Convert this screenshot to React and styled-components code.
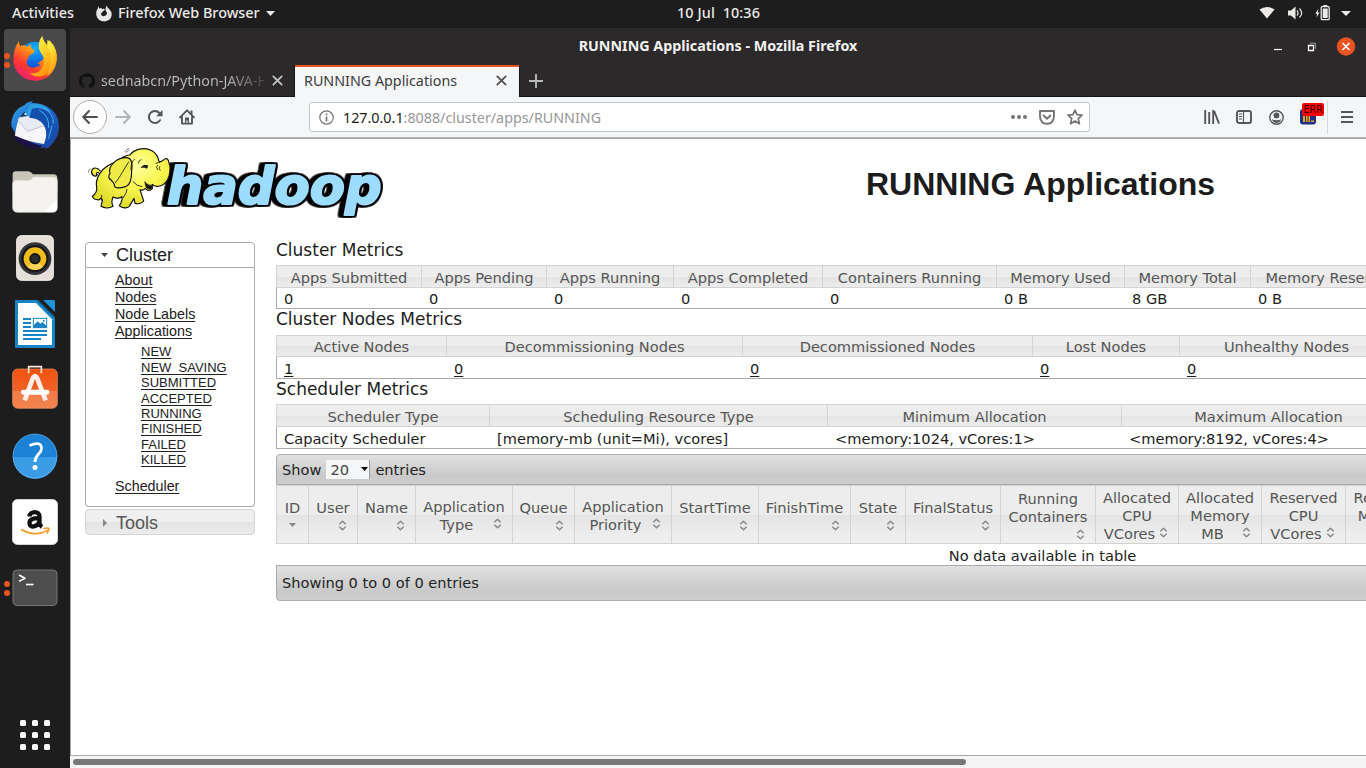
import React from 'react';
import styled, { createGlobalStyle, css } from 'styled-components';

const Global = createGlobalStyle`
  * { box-sizing: border-box; }
  html, body { margin: 0; padding: 0; overflow: hidden; background: #1d1d1d; }
`;

const ui = `'Noto Sans', 'Open Sans', sans-serif`;
const dejavu = `'DejaVu Sans', sans-serif`;
const arial = `'Liberation Sans', Arial, sans-serif`;

const Screen = styled.div`
  width: 1366px; height: 768px; overflow: hidden;
  display: flex; flex-direction: column; background: #1d1d1d;
`;

/* ---------- desktop top bar ---------- */
const TopBar = styled.header`
  height: 28px; flex: none; display: grid; grid-template-columns: 618px 201px 1fr;
  padding-bottom: 2px; align-items: center;
  color: #eceae8; font: 500 14.4px/18px ${ui};
`;
const TopLeft = styled.div`display: flex; align-items: center; padding-left: 12px; white-space: nowrap;`;
const TopLabel = styled.span`
  width: ${p => p.$w}px; margin-left: ${p => p.$ml || 0}px; padding-bottom: 1px; white-space: nowrap;
`;
const Clock = styled.div`text-align: center; white-space: pre; letter-spacing: .12px; padding-bottom: 1px;`;
const TopRight = styled.div`display: flex; justify-content: flex-end; align-items: center; padding-right: 15px;`;
const TrayIcon = styled.svg`display: block; flex: none; width: ${p => p.$w}px; height: 18px; margin-left: ${p => p.$ml || 0}px;`;

const Body = styled.div`flex: 1; display: flex; min-height: 0;`;

/* ---------- dock ---------- */
const Dock = styled.nav`
  width: 70px; flex: none; display: flex; flex-direction: column; align-items: center; gap: 4px; padding-top: 1px;
`;
const DockItem = styled.div`
  width: 62px; height: 62px; flex: none; border-radius: 4px; position: relative;
  display: flex; align-items: center; justify-content: center;
  padding-bottom: ${p => p.$lift || 0}px;
  background: ${p => (p.$active ? '#494949' : 'transparent')};
  margin-top: ${p => (p.$last ? 'auto' : 0)}; margin-bottom: ${p => (p.$last ? '2px' : 0)};
`;
const Pips = styled.div`
  position: absolute; left: 0; top: 24px; display: flex; flex-direction: column; gap: 2.5px;
  &::before, &::after { content: ''; width: 6px; height: 6px; border-radius: 50%; background: #e95420; }
`;
const Icon = styled.svg`display: block; flex: none; overflow: visible;`;

/* ---------- browser window ---------- */
const Window = styled.main`flex: 1; min-width: 0; display: flex; flex-direction: column; background: #f5f6f8;`;
const TitleBar = styled.div`
  height: 37px; flex: none; background: #2c292a; display: grid; grid-template-columns: 1fr auto 1fr; align-items: center;
  color: #f4f3f2; font: 700 14.3px ${ui};
`;
const TitleText = styled.span`padding-bottom: 2px;`;
const WindowButtons = styled.div`display: flex; justify-content: flex-end; padding-right: 10px;`;
const TabStrip = styled.div`
  height: 32px; flex: none; display: flex; background: #2c292a; border-bottom: 1px solid #151415;
`;
const Tab = styled.div`
  width: ${p => (p.$on ? 224 : 225)}px; height: 32px; flex: none; display: flex; align-items: center;
  padding: 0 12px 1px 9px;
  font: 14.3px ${ui}; color: ${p => (p.$on ? '#3c3c3c' : '#bdbcbc')};
  ${p => p.$on && css`
    background: #f5f6f8; border-top: 2px solid #e95420; padding-bottom: 3px;
    box-shadow: -1px 0 #151415, 1px 0 #151415;
  `}
`;
const TabTitle = styled.span`
  flex: 1; overflow: hidden; white-space: nowrap;
  ${p => p.$fade && css`
    margin: 0 8px 0 6px; background: linear-gradient(90deg, #bdbcbc 125px, #2c292a 170px);
    -webkit-background-clip: text; background-clip: text; color: transparent;
  `}
`;
const NewTab = styled.div`width: 34px; display: flex; align-items: center; justify-content: center;`;
const NavBar = styled.div`
  height: 41px; flex: none; background: #f5f6f8; border-bottom: 1px solid #b4b6b8;
  display: flex; align-items: center; padding-left: 3px;
`;
const BackButton = styled.div`
  width: 34px; height: 34px; border-radius: 50%; background: #fdfdfd; border: 1px solid #adadad;
  display: flex; align-items: center; justify-content: center;
`;
const NavButton = styled.div`width: ${p => p.$w || 32}px; display: flex; justify-content: center; position: relative;`;
const UrlBar = styled.div`
  width: 781px; height: 30px; margin: 0 106px; background: #fff; border: 1px solid #c3c8cc; border-radius: 3px;
  display: flex; align-items: center; padding: 0 0 0 9px;
`;
const Url = styled.span`
  flex: 1; margin-left: 9px; font: 14.3px ${ui}; color: #97979a; white-space: nowrap;
  & > b { font-weight: 400; color: #1c1c1c; }
`;
const UrlAction = styled.div`width: 28px; display: flex; justify-content: center;`;
const ErrBadge = styled.span`
  position: absolute; left: 10px; top: -6px; width: 22px; height: 13px; background: #fc0000; border-radius: 2px;
  color: #3a0000; font: 10px/14px ${dejavu}; text-align: center; letter-spacing: -.2px;
`;
const Divider = styled.div`width: 1px; height: 34px; background: #d6d8da; margin-left: 3px;`;

/* ---------- page ---------- */
const Viewport = styled.div`
  flex: 1; min-height: 0; background: #fff; border: 1px solid #a7a8a9; border-width: 1px 0 1px 1px; overflow: hidden;
  color: #1c1c1c; font: 14.6px ${dejavu};
`;
const PageHead = styled.div`height: 99px; display: flex; padding: 7px 0 0 16px;`;
const PageTitle = styled.h1`
  margin: 0 0 0 479px; padding-top: 20px; font: 700 32px/37px ${arial}; color: #1c1c1c; white-space: nowrap;
`;
const Columns = styled.div`display: flex; padding-left: 14px;`;
const Side = styled.aside`width: 170px; flex: none; margin: 4px 21px 0 0; font-family: ${arial};`;
const SideHead = styled.div`
  height: 26px; display: flex; align-items: center; font-size: 18px; padding-left: 14px;
  padding-top: ${p => (p.$open ? 0 : 2)}px;
  color: ${p => (p.$open ? '#212121' : '#555')};
  border: 1px solid ${p => (p.$open ? '#aaa' : '#d3d3d3')};
  border-radius: ${p => (p.$open ? '4px 4px 0 0' : '4px')};
  background: ${p => (p.$open ? '#fff' : 'linear-gradient(#efefef 0 50%, #e3e3e3 51%, #ececec)')};
  margin-top: ${p => (p.$open ? 0 : 2)}px;
  & > svg { margin-right: 7px; }
`;
const SideBody = styled.div`
  height: 239px; border: 1px solid #aaa; border-top: 0; border-radius: 0 0 4px 4px; padding: 4px 0 0 29px;
`;
const SideLink = styled.a`
  display: block; width: max-content; font-size: 14.3px; line-height: 17px; height: 17px; color: #212121;
  text-decoration: underline; text-underline-offset: 2px; text-decoration-skip-ink: none;
`;
const SubList = styled.div`padding: 4.4px 0 0 26px; height: 138px;`;
const SubLink = styled.a`
  display: block; width: max-content; font-size: 13px; line-height: 15.4px; color: #212121;
  text-decoration: underline; text-underline-offset: 2px; text-decoration-skip-ink: none;
`;
const Content = styled.section`width: 1533px; flex: none;`;
const Heading = styled.div`
  font-size: 17px; line-height: 20px; height: ${p => p.$h}px; padding-top: ${p => p.$pt}px; color: #1c1c1c;
`;
const Grid = styled.div`
  display: grid; grid-template-columns: ${p => p.$cols.map(c => c + 'px').join(' ')} 1fr;
  grid-template-rows: ${p => p.$head}px ${p => p.$row}px;
  border-bottom: 1px solid #aaa;
`;
const Th = styled.div`
  border: 1px solid #d3d3d3; border-right: 0; text-align: center; color: #555; white-space: nowrap;
  line-height: ${p => p.$lh}px; overflow: hidden;
  background: linear-gradient(#ededed 0 50%, #e4e4e4 51%, #ececec);
`;
const Td = styled.div`
  padding-left: ${p => (p.$first ? 7 : 8)}px; line-height: ${p => p.$lh}px; white-space: nowrap;
  border-left: ${p => (p.$first ? '1px solid #aaa' : 0)};
`;
const NodeLink = styled.a`text-decoration: underline; text-underline-offset: 2px;`;
const Bar = styled.div`
  height: ${p => p.$h}px; border: 1px solid #aaa; display: flex; align-items: center;
  padding: 0 0 ${p => (p.$top ? 0 : 2)}px 5px;
  border-radius: ${p => (p.$top ? '4px 0 0 0' : '0 0 0 4px')};
  background: linear-gradient(#e1e1e1, #cacaca 70%, #cdcdcd); color: #222;
  margin-top: ${p => (p.$top ? 5 : 0)}px;
`;
const Select = styled.div`
  width: 44px; height: 19px; margin: 0 5px; background: #f5f6f8; border-right: 1px solid #999;
  display: flex; align-items: center; justify-content: space-between; padding-left: 4px; color: #444;
`;
const SortGrid = styled.div`
  display: grid; height: 59px;
  grid-template-columns: 32px 49px 58px 97px 62px 97px 87px 92px 55px 95px 95px 83px 83px 84px 84px 1fr;
`;
const SortHead = styled.div`
  border: 1px solid #d3d3d3; border-right: 0; color: #555; overflow: hidden; padding-top: 2px;
  display: flex; flex-direction: column; justify-content: center; align-items: stretch; text-align: center;
  background: linear-gradient(#ededed 0 50%, #e4e4e4 51%, #f1f1f1);
`;
const Line = styled.div`line-height: 18px; height: 18px; white-space: nowrap;`;
const LastLine = styled(Line)`
  display: flex; align-items: center; justify-content: center; padding: 0 ${p => (p.$center ? 0 : 10)}px 0 ${p => (p.$center ? 0 : 4)}px;
  height: ${p => (p.$bare ? 16 : 18)}px;
  & > span { flex: 1; }
  & > svg { margin-top: ${p => (p.$bare ? 1 : 0)}px; margin-bottom: ${p => (p.$bare ? 0 : 2)}px; }
`;
const Empty = styled.div`height: 21px; line-height: 24px; text-align: center;`;
const ScrollTrack = styled.div`height: 12px; flex: none; background: #f5f5f5; padding: 3px 0 0 3px;`;
const ScrollThumb = styled.div`width: 893px; height: 6px; border-radius: 3px; background: #777;`;

/* ---------- icons ---------- */
const stroke = { fill: 'none', strokeLinecap: 'round', strokeLinejoin: 'round' };

const FirefoxIcon = () => (
  <Icon width="46" height="48" viewBox="0 0 138 144">
    <defs>
      <linearGradient id="ffr" x1=".8" y1="0" x2=".1" y2="1">
        <stop offset="0" stopColor="#ffcf2e" /><stop offset=".35" stopColor="#ff9a16" /><stop offset=".65" stopColor="#ff3b2f" /><stop offset="1" stopColor="#e31587" />
      </linearGradient>
      <radialGradient id="ffb" cx=".5" cy=".2" r=".8"><stop offset="0" stopColor="#12b4ff" /><stop offset=".6" stopColor="#0a63e0" /><stop offset="1" stopColor="#3a2e96" /></radialGradient>
      <linearGradient id="ffy" x1="0" y1="0" x2=".5" y2="1"><stop offset="0" stopColor="#fff44f" /><stop offset=".5" stopColor="#ffd82e" /><stop offset="1" stopColor="#ff980e" /></linearGradient>
    </defs>
    <circle cx="68" cy="66" r="49" fill="url(#ffb)" />
    <path fill="url(#ffr)" d="M21 14 C20 21 22 26 25 30 C32 27 39 27 46 32 L57 23 C55 33 60 40 68 42 L65 51 L54 57 L48 68 C40 75 44 90 56 94 C66 98 77 90 83 89 C84 84 79 82 74 82 C91 76 98 66 98 54 L105 30 L111 12 C127 26 134 44 134 68 C133 106 106 134 69 134 C32 134 4 106 4 72 C4 50 9 31 21 14Z" />
    <path fill="url(#ffy)" d="M91 0 C79 14 76 36 87 51 C99 67 99 83 90 97 C82 110 67 115 53 110 C69 128 101 125 114 101 C125 80 126 52 108 30 C99 20 93 12 91 0Z" />
    <path fill="url(#ffy)" d="M106 12 C130 28 136 48 134 70 C132 88 122 109 105 119 C119 92 122 53 106 34Z" />
  </Icon>
);

const ThunderbirdIcon = () => (
  <Icon width="50" height="50" viewBox="0 0 150 150">
    <defs><linearGradient id="tb" x1="0" y1="0" x2="1" y2="1"><stop offset="0" stopColor="#32a5e8" /><stop offset=".5" stopColor="#1d62c8" /><stop offset="1" stopColor="#1c3f9b" /></linearGradient></defs>
    <path fill="url(#tb)" d="M4 76 C2 45 20 20 43 13 C50 4 59 1 69 1 L62 8 C92 3 121 17 136 38 C151 61 150 94 137 113 C126 132 117 141 103 145 L109 137 L94 141 L18 100 Z" />
    <path fill="#f6f6fa" d="M14 107 C18 85 21 64 29 49 C54 40 89 39 105 63 C111 81 112 103 102 129 C73 124 43 116 14 107Z" />
    <path fill="#e9ebf3" stroke="#a5a9b8" strokeWidth="2" d="M23 57 L52 91 L106 73 C98 49 71 39 29 49Z" />
    <path fill="#1c1246" d="M9 101 L73 128 L98 135 L82 143 C54 142 27 132 9 101Z" />
    <path fill="#2e9ce0" d="M43 49 L60 8 C91 4 115 17 124 36 C105 24 75 20 61 49 C52 41 47 43 43 49Z" />
    <path fill="#154fae" d="M58 50 L66 23 C93 15 118 30 128 53 L124 67 L134 61 L132 83 L141 76 L130 105 L136 106 L108 137 C114 96 111 54 58 50Z" />
    <path {...stroke} stroke="#43aff0" strokeWidth="3" d="M89 28 Q119 45 116 80M102 20 Q134 42 130 68M126 74 L116 112" />
    <path fill="#18345f" d="M30 48 L43 32 Q48 36 49 45Z" /><circle cx="46" cy="39" r="3" fill="#fff" />
  </Icon>
);

const FilesIcon = () => (
  <Icon width="46" height="42" viewBox="0 0 138 126">
    <path fill="#c9c5b9" d="M2 10 Q2 1 12 1 H50 Q57 2 63 10 H124 Q136 10 136 22 V60 H2Z" />
    <path fill="#f4f3f0" stroke="#d7d3ca" strokeWidth="2" d="M2 38 Q2 28 13 28 H51 Q58 28 63 18 H124 Q136 18 136 30 V109 Q136 124 122 124 H17 Q2 124 2 109Z" />
    <path fill="#fff" d="M134 86 V109 Q134 122 121 122 H98Z" />
  </Icon>
);

const MusicIcon = () => (
  <Icon width="38" height="46" viewBox="0 0 114 138">
    <rect x="2" y="2" width="110" height="134" rx="14" fill="#e5e0d7" stroke="#f4f2ee" strokeWidth="3" />
    <circle cx="57" cy="71" r="49" fill="#34343b" /><circle cx="57" cy="71" r="41" fill="#17171d" />
    <circle cx="57" cy="71" r="34" fill="#f1bc17" /><path d="M57 71 L35 97 A34 34 0 0 0 81 95Z" fill="#f9d558" />
    <circle cx="57" cy="71" r="17" fill="#111" /><circle cx="57" cy="71" r="12" fill="#2c2c2c" />
  </Icon>
);

const WriterIcon = () => (
  <Icon width="40" height="48" viewBox="0 0 120 144">
    <path fill="#1484c6" d="M4 0 H66 L120 54 V140 Q120 144 116 144 H4 Q0 144 0 140 V4 Q0 0 4 0Z" />
    <path fill="#fff" d="M9 9 H63 L111 58 V135 H9Z" />
    <path fill="#1d1d1d" d="M66 0 H84 L120 36 V54Z" /><path fill="#0d6ca9" d="M66 0 H70 L120 50 V55Z" /><path fill="#1d93d8" d="M84 0 H116 Q120 0 120 4 V36Z" />
    <path fill="#1484c6" d="M24 54 h24v6h-24z M24 66 h24v6h-24z M24 78 h24v6h-24z M24 90 h72v6h-72z M24 102 h72v6h-72z M24 114 h54v6h-54z" />
    <rect x="55" y="55" width="40" height="28" fill="none" stroke="#1484c6" strokeWidth="3" />
    <path fill="#1484c6" d="M56 83 V76 L68 64 L76 71 L82 66 L95 77 V83Z" /><rect x="84" y="60" width="5" height="5" fill="#1484c6" />
  </Icon>
);

const SoftwareIcon = () => (
  <Icon width="46" height="44" viewBox="0 0 138 132">
    <defs><linearGradient id="sw" x1="0" y1="0" x2="0" y2="1"><stop offset="0" stopColor="#f0520f" /><stop offset=".55" stopColor="#ee6128" /><stop offset=".56" stopColor="#f27a45" /><stop offset="1" stopColor="#f28450" /></linearGradient></defs>
    <rect x="2" y="12" width="134" height="118" rx="15" fill="url(#sw)" stroke="#f3956b" strokeWidth="2" />
    <path d="M50 25 V5 H88 V25" fill="none" stroke="#fbe4d9" strokeWidth="5" />
    <path d="M38 106 L63 38 Q69 28 75 38 L101 106" fill="none" stroke="#fdf0e9" strokeWidth="14" />
    <rect x="27" y="74" width="85" height="15" rx="7" fill="#fff" />
  </Icon>
);

const HelpIcon = () => (
  <Icon width="46" height="46" viewBox="0 0 46 46">
    <circle cx="23" cy="23" r="22" fill="#1c82d6" /><path fill="#3a9ce5" d="M1 24 H45 A22 22 0 0 1 1 24Z" />
    <circle cx="23" cy="23" r="22" fill="none" stroke="#6bb8f0" strokeWidth=".7" />
    <path {...stroke} strokeLinecap="butt" stroke="#fff" strokeWidth="2.8" d="M17.5 12.5 Q29.5 7.5 29.5 15.5 C29.5 21 22.8 21.5 23 29" />
    <circle cx="23" cy="34.5" r="2.5" fill="#fff" />
  </Icon>
);

const AmazonIcon = () => (
  <Icon width="46" height="46" viewBox="0 0 46 46">
    <rect x=".5" y=".5" width="45" height="45" rx="5" fill="#fff" stroke="#d2d2d2" />
    <path fill="none" stroke="#111" strokeWidth="4.3" d="M17.3 17.6 C18 11.8 27.5 11.4 27.5 17.7 V24 Q27.7 26.5 30 28 M27.3 19.2 C20 19 17.5 21 17.5 24 C17.5 29.5 25.8 28.2 27.3 22.5" />
    <path {...stroke} stroke="#f7981d" strokeWidth="1.5" d="M9.5 30.5 Q22.5 38.5 35.5 31.3 M32 29.5 Q36.5 28.6 37 29.4 Q37.3 30.7 35.3 34" />
  </Icon>
);

const TerminalIcon = () => (
  <Icon width="46" height="38" viewBox="0 0 46 38">
    <rect x="1" y="1" width="44" height="35.5" rx="4" fill="#4d4d4d" stroke="#777" />
    <path {...stroke} strokeLinecap="butt" stroke="#fff" strokeWidth="1.6" d="M7 6 L13 9.2 L7 12.4" /><path d="M14 15.5 h7.5" stroke="#fff" strokeWidth="1.6" />
  </Icon>
);

const GridIcon = () => (
  <Icon width="30" height="30" viewBox="0 0 30 30">
    {[0, 12, 24].map(y => [0, 12, 24].map(x => <rect key={x + '-' + y} x={x} y={y} width="6" height="6" rx="1.5" fill="#fafafa" />))}
  </Icon>
);

const Cross = ({ color }) => (
  <Icon width="11" height="11" viewBox="0 0 11 11"><path {...stroke} stroke={color} strokeWidth="1.7" d="M1.3 1.3 L9.7 9.7 M9.7 1.3 L1.3 9.7" /></Icon>
);

const SortIcon = () => (
  <Icon width="9" height="11" viewBox="0 0 9 11"><path {...stroke} strokeLinecap="butt" stroke="#888" strokeWidth="1.5" d="M1.3 4.2 L4.5 1.2 L7.7 4.2 M1.3 6.8 L4.5 9.8 L7.7 6.8" /></Icon>
);

const Wordmark = styled.text`
  font: italic 700 157px ${dejavu};
  fill: #9cdcff; stroke: #9cdcff; stroke-width: 6px; stroke-linejoin: round;
  filter: drop-shadow(5px 0 0 #000) drop-shadow(-5px 0 0 #000) drop-shadow(0 5px 0 #000) drop-shadow(0 -5px 0 #000) drop-shadow(-11px 0 0 #000);
`;

const HadoopLogo = () => (
  <Icon width="300" height="74" viewBox="51 30 900 222">
    <defs>
      <radialGradient id="el" cx=".55" cy=".3" r=".7"><stop offset="0" stopColor="#ffffa6" /><stop offset=".5" stopColor="#f9f650" /><stop offset="1" stopColor="#dedb2c" /></radialGradient>
    </defs>
    <Wordmark x="290" y="203" textLength="645" lengthAdjust="spacingAndGlyphs">hadoop</Wordmark>
    <g stroke="#111" strokeWidth="3.5" strokeLinejoin="round" strokeLinecap="round">
      <path fill="#f1ed45" d="M88 112 C80 104 76 118 82 116 C76 126 63 117 65 105 C67 94 81 92 91 105" />
      <path fill="url(#el)" d="M88 115 C100 94 117 82 147 77 C151 66 170 56 180 57 C191 40 222 31 246 44 C258 51 264 61 267 76 C277 82 281 66 289 68 C298 69 295 79 300 90 C301 116 296 142 270 150 C260 153 252 150 247 145 L247 158 C239 166 231 164 226 157 C221 162 216 164 210 161 L221 195 C215 203 203 205 195 202 L192 187 L178 211 C170 219 157 216 148 209 C154 201 158 194 156 182 C146 189 137 187 129 183 C124 195 125 203 129 211 C118 218 102 217 93 211 L97 194 L92 187 L86 192 C76 191 69 188 67 181 C76 174 82 166 80 155 C77 139 81 126 88 115Z" />
      <path fill="#efec48" d="M120 113 C113 91 138 64 171 65 C187 67 188 89 185 104 C185 124 182 145 169 151 C156 156 138 158 134 152 C135 143 129 139 124 133 C116 127 113 121 120 113Z" />
      <path fill="none" strokeWidth="2.5" d="M136 140 C149 126 164 95 176 78 M183 101 Q182 78 193 70 M189 137 Q200 151 216 152 M97 194 Q93 184 95 178 M160 185 Q171 170 171 160" />
      <path fill="none" strokeWidth="2.5" d="M205 81 Q206 73 213 71 M262 88 Q256 95 263 101 M269 92 Q266 98 270 103 M258 82 L270 79" />
      <path fill="#111" strokeWidth="2" d="M214 94 Q223 84 233 89 L231 97 Q224 92 214 94Z M225 138 Q234 150 247 148 L244 158 Q233 162 228 153Z" />
      <path fill="none" strokeWidth="1.5" d="M164 47 Q168 39 178 38 M168 50 L176 44 M55 109 Q56 99 61 97" />
    </g>
  </Icon>
);

/* ---------- data ---------- */
const clusterMetrics = [['Apps Submitted', '0'], ['Apps Pending', '0'], ['Apps Running', '0'], ['Apps Completed', '0'], ['Containers Running', '0'], ['Memory Used', '0 B'], ['Memory Total', '8 GB'], ['Memory Reserved', '0 B']];
const nodeMetrics = [['Active Nodes', '1'], ['Decommissioning Nodes', '0'], ['Decommissioned Nodes', '0'], ['Lost Nodes', '0'], ['Unhealthy Nodes', '0']];
const schedulerMetrics = [['Scheduler Type', 'Capacity Scheduler'], ['Scheduling Resource Type', '[memory-mb (unit=Mi), vcores]'], ['Minimum Allocation', '<memory:1024, vCores:1>'], ['Maximum Allocation', '<memory:8192, vCores:4>']];
const sortColumns = [['User', ''], ['Name', ''], ['Application', 'Type'], ['Queue', ''], ['Application', 'Priority'], ['StartTime', ''], ['FinishTime', ''], ['State', ''], ['FinalStatus', ''], ['Running', 'Containers', ''], ['Allocated', 'CPU', 'VCores'], ['Allocated', 'Memory', 'MB'], ['Reserved', 'CPU', 'VCores'], ['Reserved', 'Memory', 'MB']];
const states = ['NEW', 'NEW_SAVING', 'SUBMITTED', 'ACCEPTED', 'RUNNING', 'FINISHED', 'FAILED', 'KILLED'];

const Metrics = ({ data, cols, head, row, lh, link }) => (
  <Grid $cols={cols} $head={head} $row={row}>
    {data.map(([h]) => <Th key={h} $lh={link ? 21 : 23}>{h}</Th>)}<Th />
    {data.map(([h, v], i) => <Td key={h} $first={i === 0} $lh={lh}>{link ? <NodeLink>{v}</NodeLink> : v}</Td>)}<Td />
  </Grid>
);

const DesktopBar = () => (
  <TopBar>
    <TopLeft>
      <TopLabel $w={84}>Activities</TopLabel>
      <Icon width="16" height="17" viewBox="0 0 16 17">
        <path fill="#e8e6e4" d="M2.3 1 L3.2 3.4 Q5 2.6 6.2 4 Q8 3.3 9 4 Q8.2 6 6.8 6.4 Q6 8 4.9 8.5 Q5 11 7.5 11.3 Q10.2 11 11 8.7 Q11 6.8 9.6 6 Q9 3 10.8 .5 Q11 2.5 13.2 4 Q16 6.5 15.7 10 Q15 16 8.3 16.4 Q1.7 16 .4 10.5 Q-.2 5.8 1.5 4.3Z" />
        <path stroke="#1d1d1d" strokeWidth="1" fill="none" d="M6 8.6 Q8 7.6 9.8 9" />
      </Icon>
      <TopLabel $w={148} $ml={6}>Firefox Web Browser</TopLabel>
      <Icon width="9" height="5" viewBox="0 0 9 5"><path fill="#e8e6e4" d="M0 0 H9 L4.5 5Z" /></Icon>
    </TopLeft>
    <Clock>10 Jul  10:36</Clock>
    <TopRight>
      <TrayIcon $w={16} viewBox="0 0 16 18"><path fill="#eceae8" d="M.5 5.5 Q8 .5 15.5 5.5 L8 14.5Z" /></TrayIcon>
      <TrayIcon $w={16} $ml={13} viewBox="0 0 16 18"><path fill="#eceae8" d="M0 6.5 H3 L7.5 2.5 V15.5 L3 11.5 H0Z" /><path {...stroke} stroke="#eceae8" strokeWidth="1.2" d="M9.3 6.8 Q10.8 9 9.3 11.2 M11.8 4.8 Q15.5 9 11.8 13.2" /></TrayIcon>
      <TrayIcon $w={16} $ml={11} viewBox="0 0 16 18"><path fill="#eceae8" d="M3.3 5 L.3 9.7 H2.1 L1.4 13.5 L4.6 8.5 H2.8Z M8.3 1 H12.3 V3 H8.3Z" /><rect x="6.2" y="2.7" width="8" height="13" rx="1" fill="none" stroke="#eceae8" strokeWidth="1.3" /><path fill="#eceae8" d="M7.7 4.5 h5 v9.5 h-5z" /></TrayIcon>
      <TrayIcon $w={10} $ml={10} viewBox="0 0 10 18"><path fill="#eceae8" d="M0 7 H10 L5 12Z" /></TrayIcon>
    </TopRight>
  </TopBar>
);

const Navigation = () => (
  <NavBar>
    <BackButton><Icon width="16" height="14" viewBox="0 0 16 14"><path {...stroke} stroke="#4e4f51" strokeWidth="2" d="M7 1 L1.2 7 L7 13 M1.5 7 H15" /></Icon></BackButton>
    <NavButton><Icon width="16" height="14" viewBox="0 0 16 14"><path {...stroke} stroke="#b3b4b6" strokeWidth="2" d="M9 1 L14.8 7 L9 13 M14.5 7 H1" /></Icon></NavButton>
    <NavButton><Icon width="16" height="16" viewBox="0 0 16 16"><path {...stroke} stroke="#555658" strokeWidth="2" d="M13 11.2 A6 6 0 1 1 12.4 4" /><path fill="#555658" d="M15.5 1 V7.3 H9.2Z" /></Icon></NavButton>
    <NavButton><Icon width="16" height="16" viewBox="0 0 16 16"><path {...stroke} stroke="#555658" strokeWidth="1.9" d="M1 8.3 L8 1.3 L15 8.3 M3 8 V14.6 H13 V8" /><path fill="#555658" d="M6 8.5 h4 v6 h-1.3 v-3 h-1.4 v3 h-1.3z M11.5 1.5 h2 v4 h-2z" /></Icon></NavButton>
    <UrlBar>
      <Icon width="15" height="15" viewBox="0 0 15 15"><circle cx="7.5" cy="7.5" r="6.7" fill="none" stroke="#737476" strokeWidth="1.2" /><path d="M7.5 6.5 v5 M7.5 3.5 v1.7" stroke="#737476" strokeWidth="1.7" /></Icon>
      <Url><b>127.0.0.1</b>:8088/cluster/apps/RUNNING</Url>
      <UrlAction><Icon width="16" height="4" viewBox="0 0 16 4"><g fill="#737476"><circle cx="2" cy="2" r="2" /><circle cx="8" cy="2" r="2" /><circle cx="14" cy="2" r="2" /></g></Icon></UrlAction>
      <UrlAction><Icon width="16" height="15" viewBox="0 0 16 15"><path {...stroke} stroke="#737476" strokeWidth="1.9" d="M1 1 H15 V6.5 Q14.5 13.7 8 13.8 Q1.5 13.7 1 6.5Z M4.6 5.5 L8 8.7 L11.4 5.5" /></Icon></UrlAction>
      <UrlAction><Icon width="16" height="16" viewBox="0 0 16 16"><path {...stroke} stroke="#737476" strokeWidth="1.7" d="M8 1.2 L10 5.7 L15 6.2 L11.3 9.6 L12.4 14.7 L8 12 L3.6 14.7 L4.7 9.6 L1 6.2 L6 5.7Z" /></Icon></UrlAction>
    </UrlBar>
    <NavButton><Icon width="16" height="14" viewBox="0 0 16 14"><path d="M1.2 0 V14 M5.2 2 V14 M9.2 0 V14 M10.2 1 L15 13.7" stroke="#555658" strokeWidth="1.9" /></Icon></NavButton>
    <NavButton><Icon width="16" height="14" viewBox="0 0 16 14"><rect x="1" y="1" width="14" height="12" rx="2" fill="none" stroke="#555658" strokeWidth="1.9" /><path d="M7.5 1 V13 M3 4 h3 M3 6.5 h3 M3 9 h3" stroke="#555658" strokeWidth="1.2" /></Icon></NavButton>
    <NavButton><Icon width="15" height="15" viewBox="0 0 15 15"><circle cx="7.5" cy="7.5" r="6.7" fill="none" stroke="#555658" strokeWidth="1.4" /><circle cx="7.5" cy="5.5" r="2.9" fill="#555658" /><path fill="#555658" d="M2.8 9.2 Q7.5 11.3 12.2 9.2 Q10.8 13 7.5 13 Q4.2 13 2.8 9.2Z" /></Icon></NavButton>
    <NavButton>
      <Icon width="16" height="16" viewBox="0 0 16 16"><rect y="0" width="16" height="15.5" rx="3" fill="#1d3282" /><path fill="#f9a51b" d="M3 7 h2 v6 h-2z M6 7 h1.5 v6 h-1.5z M8.5 7 h1.5 v6 h-1.5z M11 11.5 h3 v1.5 h-3z" /></Icon>
      <ErrBadge>ERR</ErrBadge>
    </NavButton>
    <Divider />
    <NavButton $w={38}><Icon width="12" height="12" viewBox="0 0 12 12"><path d="M0 1 H12 M0 6 H12 M0 11 H12" stroke="#555658" strokeWidth="2" /></Icon></NavButton>
  </NavBar>
);

export default function App() {
  return (
    <Screen>
      <Global />
      <DesktopBar />
      <Body>
        <Dock>
          <DockItem $active><Pips /><FirefoxIcon /></DockItem>
          <DockItem><ThunderbirdIcon /></DockItem>
          <DockItem><FilesIcon /></DockItem>
          <DockItem><MusicIcon /></DockItem>
          <DockItem><WriterIcon /></DockItem>
          <DockItem $lift={7}><SoftwareIcon /></DockItem>
          <DockItem><HelpIcon /></DockItem>
          <DockItem><AmazonIcon /></DockItem>
          <DockItem><Pips /><TerminalIcon /></DockItem>
          <DockItem $last><GridIcon /></DockItem>
        </Dock>
        <Window>
          <TitleBar>
            <span />
            <TitleText>RUNNING Applications - Mozilla Firefox</TitleText>
            <WindowButtons>
              <Icon width="88" height="20" viewBox="0 0 88 20">
                <path d="M6 12.5 h8" stroke="#fff" strokeWidth="1.2" />
                <path d="M40.5 8.5 h5 v5 h-5z" fill="none" stroke="#fff" strokeWidth="1.3" /><path d="M42 6.2 h5.5 v5.5" fill="none" stroke="#999" />
                <circle cx="78" cy="9.5" r="9.2" fill="#e95420" /><path d="M74.5 6 L81.5 13 M81.5 6 L74.5 13" stroke="#fff" strokeWidth="1.6" />
              </Icon>
            </WindowButtons>
          </TitleBar>
          <TabStrip>
            <Tab>
              <Icon width="16" height="16" viewBox="0 0 16 16"><path fill="#111" d="M8 .2 A8 8 0 0 0 5.5 15.8 V13.5 Q3.3 13.8 2.8 12.2 L1.8 11.2 Q3.3 11 4 12.3 Q4.7 12.9 5.6 12.5 L6 11.6 Q3 11 2.9 7.9 L3.8 5.6 L3.8 3.5 L6 4.3 Q8 3.9 10 4.3 L12.2 3.5 V5.6 Q14 9.8 10 11.6 L10.5 13 V15.8 A8 8 0 0 0 8 .2Z" /></Icon>
              <TabTitle $fade>sednabcn/Python-JAVA-H</TabTitle>
              <Cross color="#c8c8c8" />
            </Tab>
            <Tab $on>
              <TabTitle>RUNNING Applications</TabTitle>
              <Cross color="#4d4d4d" />
            </Tab>
            <NewTab><Icon width="14" height="14" viewBox="0 0 14 14"><path d="M7 0 V14 M0 7 H14" stroke="#bbb" strokeWidth="1.8" /></Icon></NewTab>
          </TabStrip>
          <Navigation />
          <Viewport>
            <PageHead>
              <HadoopLogo />
              <PageTitle>RUNNING Applications</PageTitle>
            </PageHead>
            <Columns>
              <Side>
                <SideHead $open><Icon width="9" height="4" viewBox="0 0 9 4"><path fill="#444" d="M1 0 H8 L4.5 4Z" /></Icon>Cluster</SideHead>
                <SideBody>
                  <SideLink>About</SideLink><SideLink>Nodes</SideLink><SideLink>Node Labels</SideLink><SideLink>Applications</SideLink>
                  <SubList>{states.map(s => <SubLink key={s}>{s}</SubLink>)}</SubList>
                  <SideLink>Scheduler</SideLink>
                </SideBody>
                <SideHead><Icon width="9" height="8" viewBox="0 0 9 8"><path fill="#888" d="M3 0 V8 L7 4Z" /></Icon>Tools</SideHead>
              </Side>
              <Content>
                <Heading $h={27} $pt={2}>Cluster Metrics</Heading>
                <Metrics data={clusterMetrics} cols={[145, 125, 127, 149, 174, 128, 126, 162]} head={23} row={20} lh={22} />
                <Heading $h={26} $pt={0}>Cluster Nodes Metrics</Heading>
                <Metrics data={nodeMetrics} cols={[170, 296, 290, 147, 214]} head={22} row={21} lh={24} link />
                <Heading $h={25} $pt={0}>Scheduler Metrics</Heading>
                <Metrics data={schedulerMetrics} cols={[213, 338, 294, 294]} head={23} row={21} lh={23} />
                <Bar $top $h={31}>Show<Select>20<Icon width="9" height="5" viewBox="0 0 9 5"><path fill="#000" d="M1 0 H8 L4.5 4Z" /></Icon></Select>entries</Bar>
                <SortGrid>
                  <SortHead><Line>ID</Line><LastLine $center $bare><Icon width="7" height="4" viewBox="0 0 7 4"><path fill="#888" d="M0 0 H7 L3.5 4Z" /></Icon></LastLine></SortHead>
                  {sortColumns.map((lines, i) => (
                    <SortHead key={i}>
                      {lines.slice(0, -1).map(l => <Line key={l}>{l}</Line>)}
                      <LastLine $bare={!lines[lines.length - 1]}><span>{lines[lines.length - 1]}</span><SortIcon /></LastLine>
                    </SortHead>
                  ))}
                  <SortHead />
                </SortGrid>
                <Empty>No data available in table</Empty>
                <Bar $h={36}>Showing 0 to 0 of 0 entries</Bar>
              </Content>
            </Columns>
          </Viewport>
          <ScrollTrack><ScrollThumb /></ScrollTrack>
        </Window>
      </Body>
    </Screen>
  );
}
